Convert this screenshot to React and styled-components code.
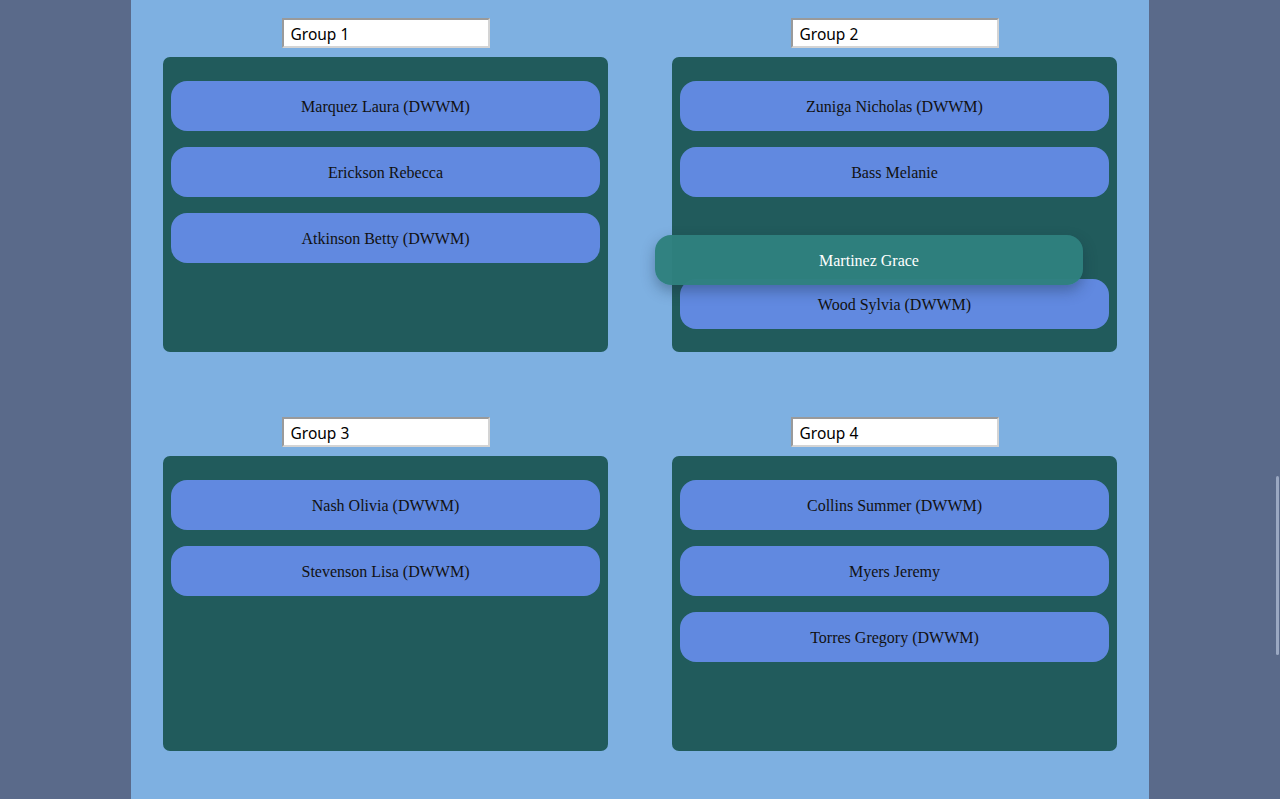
import React from "react";
import styled, { createGlobalStyle } from "styled-components";

const GlobalStyle = createGlobalStyle`
  html, body {
    margin: 0;
    padding: 0;
    height: 100%;
    overflow: hidden;
    background: #5a6a8a;
  }
  #root {
    height: 100%;
  }
`;

const Page = styled.div`
  height: 799px;
  display: flex;
  justify-content: center;
`;

const Board = styled.div`
  width: 1018px;
  height: 100%;
  box-sizing: border-box;
  background: #7eb0e1;
  padding: 18px 32px 0;
  display: grid;
  grid-template-columns: 445px 445px;
  column-gap: 64px;
  row-gap: 65px;
  align-content: start;
`;

const Group = styled.div`
  display: flex;
  flex-direction: column;
  align-items: center;
  position: relative;
`;

const NameInput = styled.input`
  width: 208px;
  height: 30px;
  box-sizing: border-box;
  border: 2px solid #d4d4d4;
  border-top-color: #9a9a9a;
  border-left-color: #9a9a9a;
  background: #fff;
  padding: 1px 7px 0;
  font-family: "Noto Sans", "DejaVu Sans", sans-serif;
  font-size: 15.5px;
  color: #000;
  margin-bottom: 9px;
  outline: none;
`;

const Panel = styled.div`
  width: 100%;
  height: 295px;
  box-sizing: border-box;
  background: #215b5c;
  border-radius: 7px;
  padding: 24px 8px;
  display: flex;
  flex-direction: column;
  gap: 16px;
  position: relative;
`;

const Card = styled.div`
  height: 50px;
  box-sizing: border-box;
  padding-top: 2px;
  flex-shrink: 0;
  border-radius: 16px;
  background: ${(p) => (p.$placeholder ? "transparent" : "#6189e0")};
  display: flex;
  align-items: center;
  justify-content: center;
  font-family: "Liberation Serif", "Times New Roman", serif;
  font-size: 16px;
  color: #111;
`;

const DraggedCard = styled(Card)`
  position: absolute;
  left: -17px;
  top: 178px;
  width: 428px;
  background: rgba(46, 128, 126, 0.97);
  color: #fff;
  box-shadow: 0 6px 14px rgba(20, 40, 60, 0.35);
  z-index: 2;
`;

const ScrollThumb = styled.div`
  position: fixed;
  right: 1px;
  top: 476px;
  width: 3px;
  height: 179px;
  border-radius: 2px;
  background: #9aa8c2;
`;

const groups = [
  { name: "Group 1", members: ["Marquez Laura (DWWM)", "Erickson Rebecca", "Atkinson Betty (DWWM)"] },
  { name: "Group 2", members: ["Zuniga Nicholas (DWWM)", "Bass Melanie", null, "Wood Sylvia (DWWM)"], dragged: "Martinez Grace" },
  { name: "Group 3", members: ["Nash Olivia (DWWM)", "Stevenson Lisa (DWWM)"] },
  { name: "Group 4", members: ["Collins Summer (DWWM)", "Myers Jeremy", "Torres Gregory (DWWM)"] },
];

export default function App() {
  return (
    <>
      <GlobalStyle />
      <Page>
        <Board>
          {groups.map((g) => (
            <Group key={g.name}>
              <NameInput defaultValue={g.name} />
              <Panel>
                {g.members.map((m, i) =>
                  m ? <Card key={i}>{m}</Card> : <Card key={i} $placeholder />
                )}
                {g.dragged && <DraggedCard>{g.dragged}</DraggedCard>}
              </Panel>
            </Group>
          ))}
        </Board>
      </Page>
      <ScrollThumb />
    </>
  );
}
